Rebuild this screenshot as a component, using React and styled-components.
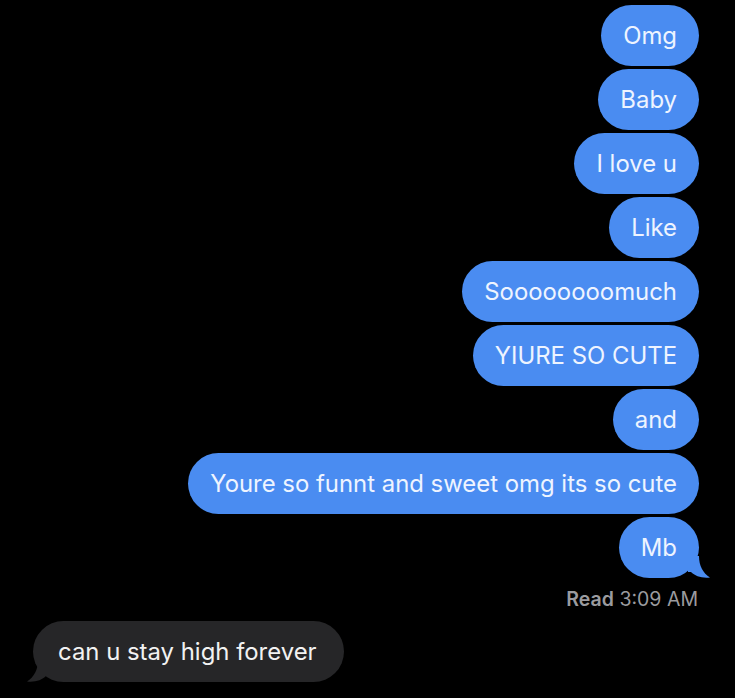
import React from "react";
import styled, { createGlobalStyle } from "styled-components";

const Global = createGlobalStyle`
  html, body { margin: 0; padding: 0; background: #000; }
  body { font-family: "Inter", "Liberation Sans", sans-serif; }
`;

const Screen = styled.div`
  width: 735px;
  height: 698px;
  background: #000;
  box-sizing: border-box;
  padding: 5px 36px 0 33px;
  display: flex;
  flex-direction: column;
  overflow: hidden;
`;

const Sent = styled.div`
  display: flex;
  flex-direction: column;
  align-items: flex-end;
  gap: 3px;
`;

const Bubble = styled.div`
  position: relative;
  box-sizing: border-box;
  height: 61px;
  padding: ${(p) => (p.$me ? "0 22px" : "0 27px 0 25px")};
  display: flex;
  align-items: center;
  border-radius: 31px;
  font-size: 23.9px;
  white-space: nowrap;
  background: ${(p) => (p.$me ? "#4a8cf1" : "#262628")};
  color: ${(p) => (p.$me ? "#eef4ff" : "#f2f2f2")};
`;

const Tail = styled.svg`
  position: absolute;
  bottom: 0;
  ${(p) => (p.$left ? "left: -6px; transform: scaleX(-1);" : "right: -11px;")}
  width: 22px;
  height: 22px;
`;

const Receipt = styled.div`
  align-self: flex-end;
  margin-top: 9px;
  margin-right: 1px;
  font-size: 19.5px;
  line-height: 24px;
  color: #9b9b9f;
  b { font-weight: 600; }
`;

const Received = styled.div`
  margin-top: 10px;
  display: flex;
`;

const TailShape = ({ color, left }) => (
  <Tail $left={left} viewBox="0 0 22 22">
    <path d="M0 0 L11 0 C11 10 15 17 22 21.5 C14 22.5 7 20 3 16 L0 16 Z" fill={color} />
  </Tail>
);

const msgs = [
  "Omg",
  "Baby",
  "I love u",
  "Like",
  "S" + "o".repeat(8) + "much",
  "YIURE SO CUTE",
  "and",
  "Youre so funnt and sweet omg its so cute",
];

export default function App() {
  return (
    <>
      <Global />
      <Screen>
        <Sent>
          {msgs.map((m) => (
            <Bubble key={m} $me>
              {m}
            </Bubble>
          ))}
          <Bubble $me>
            Mb
            <TailShape color="#4a8cf1" />
          </Bubble>
        </Sent>
        <Receipt>
          <b>Read</b> 3:09 AM
        </Receipt>
        <Received>
          <Bubble>
            can u stay high forever
            <TailShape color="#262628" left />
          </Bubble>
        </Received>
      </Screen>
    </>
  );
}
